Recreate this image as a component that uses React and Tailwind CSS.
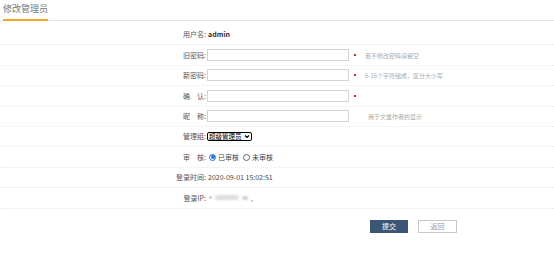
import React from "react";

const Row = ({ label, children }) => (
  <div className="flex items-center h-[20.4px] border-b border-dotted border-[#ececec]">
    <div className="w-[207px] shrink-0 text-right pr-[1px] text-[#555]">{label}</div>
    <div className="flex items-center">{children}</div>
  </div>
);

const Input = () => (
  <input className="w-[142px] h-[12px] border border-[#d4d4d4] bg-white outline-none" />
);

const Star = () => <span className="ml-[5px] w-[2px] h-[2px] bg-[#e0262b]" />;

export default function App() {
  return (
    <div
      className="w-[554px] h-[261px] bg-white text-[7px] text-[#333]"
      style={{ fontFamily: '"Noto Sans CJK SC", "Noto Sans", sans-serif' }}
    >
      <div className="h-[21px] border-b border-[#e6e6e6] px-[3px] flex">
        <div className="h-[21px] border-b-2 border-[#f5a623] -mb-[1px] pt-[3px] text-[9px] text-[#777] leading-[12px]">
          修改管理员
        </div>
      </div>

      <div className="pt-[4px]">
        <Row label="用户名:">
          <span className="font-bold text-[#333] ml-[1px]">admin</span>
        </Row>
        <Row label="旧密码:">
          <Input />
          <Star />
          <span className="ml-[9px] text-[6px] text-[#aaa]">若不修改密码请留空</span>
        </Row>
        <Row label="新密码:">
          <Input />
          <Star />
          <span className="ml-[9px] text-[6px] text-[#aaa]">6-16个字符组成，区分大小写</span>
        </Row>
        <Row label="确　认:">
          <Input />
          <Star />
        </Row>
        <Row label="昵　称:">
          <Input />
          <span className="ml-[19px] text-[6px] text-[#aaa]">用于文章作者的显示</span>
        </Row>
        <Row label="管理组:">
          <div className="flex items-center h-[9px] border border-black rounded-[2px] px-[1px] gap-[2px] text-[6.5px] text-black">
            <span>超级管理员</span>
            <svg width="6" height="5" viewBox="0 0 6 5">
              <path d="M1 1.5 L3 3.5 L5 1.5" fill="none" stroke="black" strokeWidth="1.2" />
            </svg>
          </div>
        </Row>
        <Row label="审　核:">
          <span className="ml-[2px] w-[7px] h-[7px] rounded-full border border-[#1a73e8] flex items-center justify-center">
            <span className="w-[4px] h-[4px] rounded-full bg-[#1a73e8]" />
          </span>
          <span className="ml-[2px] text-[#444]">已审核</span>
          <span className="ml-[4px] w-[7px] h-[7px] rounded-full border border-[#666]" />
          <span className="ml-[2px] text-[#444]">未审核</span>
        </Row>
        <Row label="登录时间:">
          <span className="ml-[1px] text-[#444]">2020-09-01 15:02:51</span>
        </Row>
        <Row label="登录IP:">
          <span className="ml-[2px] flex items-center gap-[3px]">
            <span className="w-[3px] h-[3px] bg-[#ccc] rounded-full blur-[0.5px]" />
            <span className="w-[24px] h-[5px] bg-[#ddd] rounded-full blur-[1px]" />
            <span className="w-[6px] h-[4px] bg-[#ccc] rounded-full blur-[0.8px]" />
            <span className="text-[#777]">,</span>
          </span>
        </Row>

        <div className="flex pt-[11px] pl-[370px] gap-[10px]">
          <button className="w-[38px] h-[13px] bg-[#3b5674] text-white text-[7px] leading-none">提交</button>
          <button className="w-[39px] h-[13px] bg-white border border-[#c8c8c8] text-[#999] text-[7px] leading-none">
            返回
          </button>
        </div>
      </div>
    </div>
  );
}
